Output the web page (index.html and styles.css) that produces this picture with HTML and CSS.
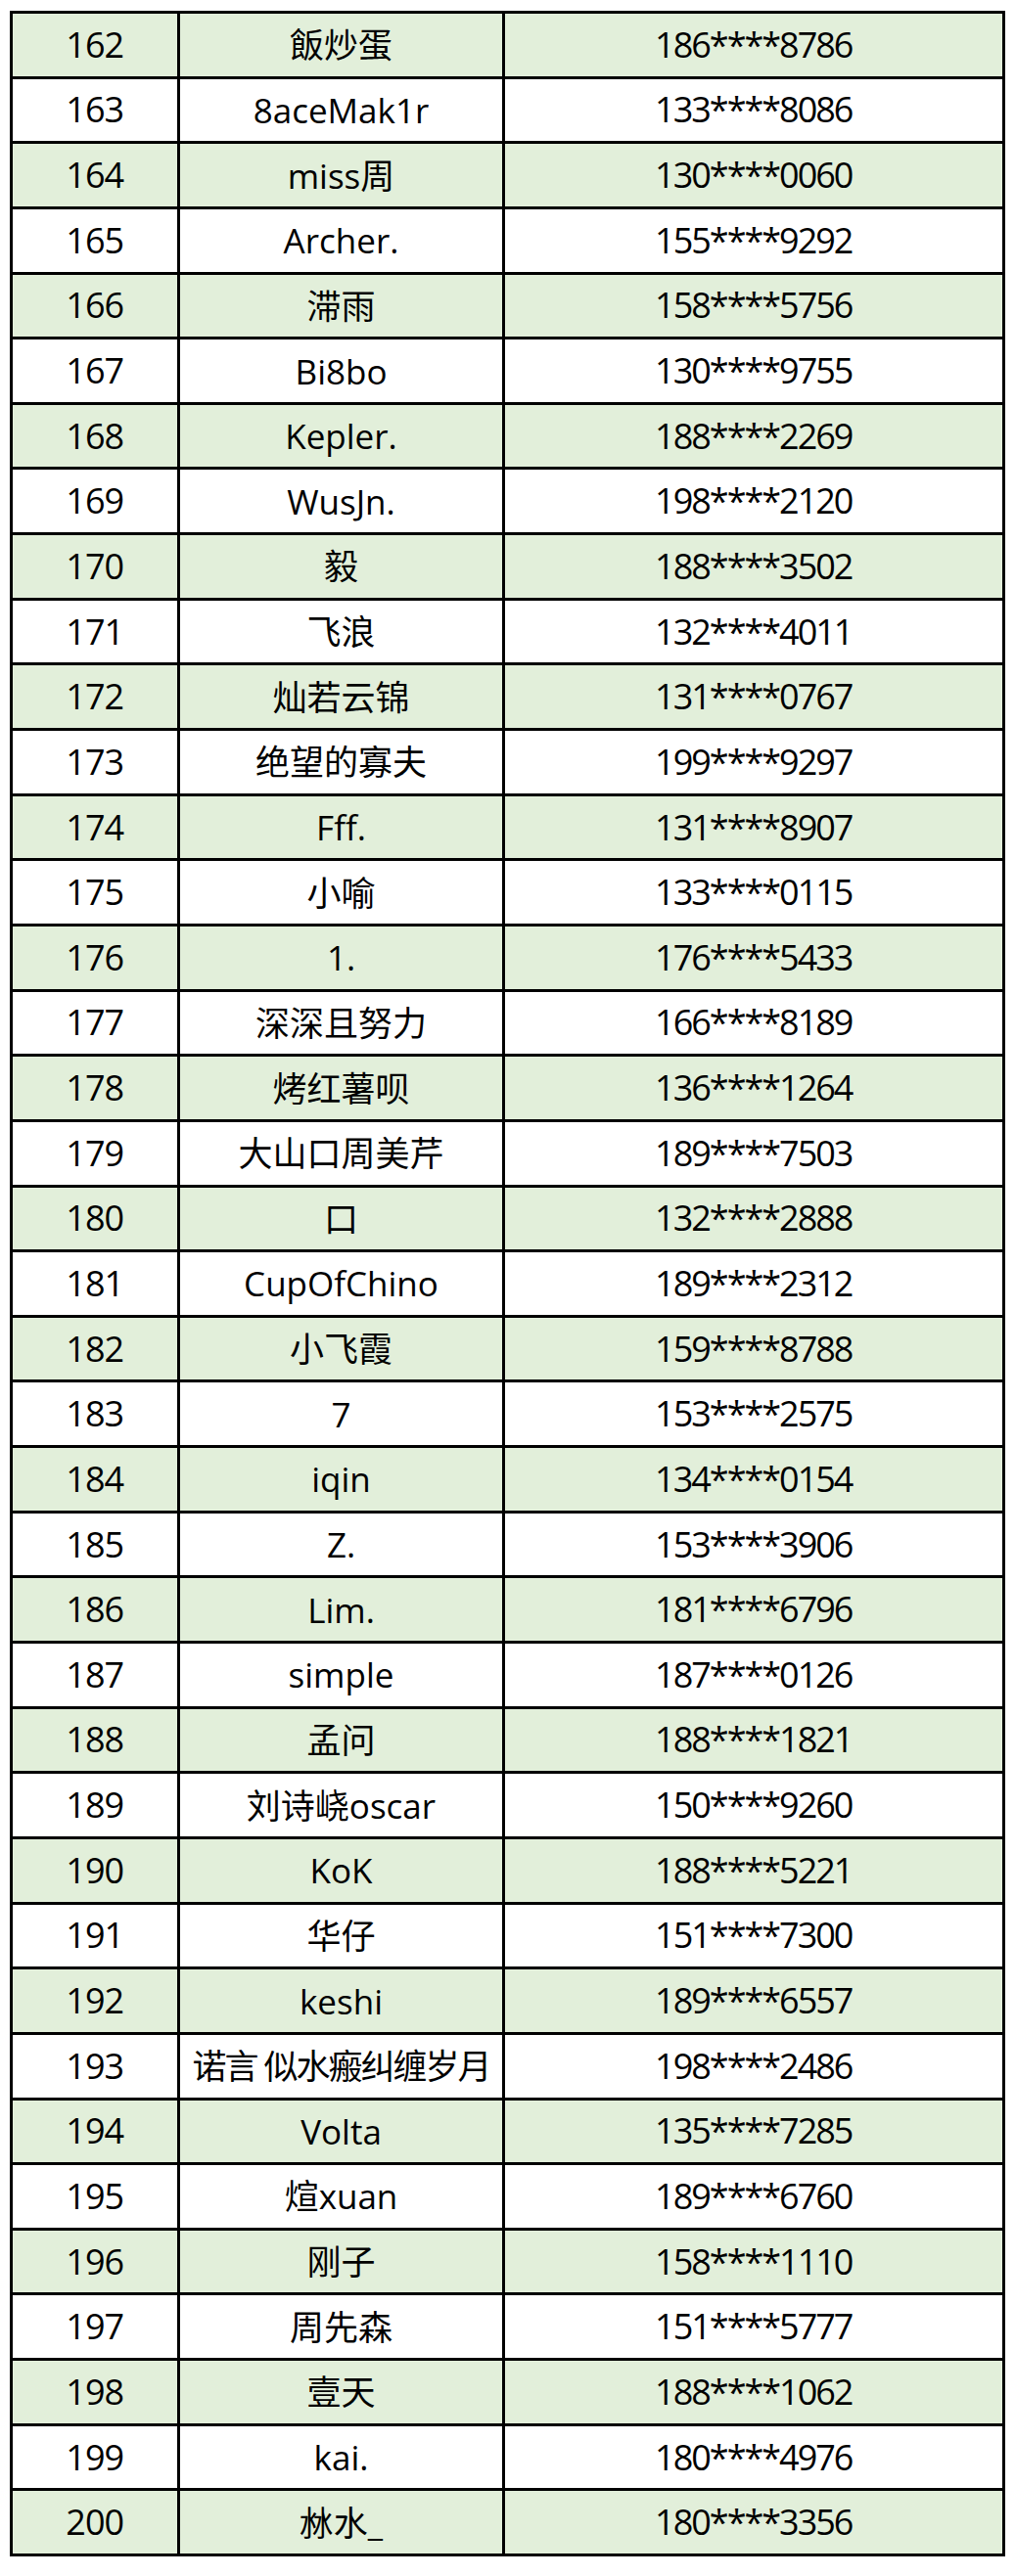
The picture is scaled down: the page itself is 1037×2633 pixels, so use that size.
FILE: index.html
```html
<!DOCTYPE html>
<html lang="zh-CN">
<head>
<meta charset="utf-8">
<title>名单</title>
<link rel="stylesheet" href="styles.css">
</head>
<body>
<div class="sheet">
<div class="cell num g">162</div><div class="cell name g">飯炒蛋</div><div class="cell tel g">186****8786</div>
<div class="cell num">163</div><div class="cell name">8aceMak1r</div><div class="cell tel">133****8086</div>
<div class="cell num g">164</div><div class="cell name g">miss周</div><div class="cell tel g">130****0060</div>
<div class="cell num">165</div><div class="cell name">Archer.</div><div class="cell tel">155****9292</div>
<div class="cell num g">166</div><div class="cell name g">滞雨</div><div class="cell tel g">158****5756</div>
<div class="cell num">167</div><div class="cell name">Bi8bo</div><div class="cell tel">130****9755</div>
<div class="cell num g">168</div><div class="cell name g">Kepler.</div><div class="cell tel g">188****2269</div>
<div class="cell num">169</div><div class="cell name">WusJn.</div><div class="cell tel">198****2120</div>
<div class="cell num g">170</div><div class="cell name g">毅</div><div class="cell tel g">188****3502</div>
<div class="cell num">171</div><div class="cell name">飞浪</div><div class="cell tel">132****4011</div>
<div class="cell num g">172</div><div class="cell name g">灿若云锦</div><div class="cell tel g">131****0767</div>
<div class="cell num">173</div><div class="cell name">绝望的寡夫</div><div class="cell tel">199****9297</div>
<div class="cell num g">174</div><div class="cell name g">Fff.</div><div class="cell tel g">131****8907</div>
<div class="cell num">175</div><div class="cell name">小喻</div><div class="cell tel">133****0115</div>
<div class="cell num g">176</div><div class="cell name g">1.</div><div class="cell tel g">176****5433</div>
<div class="cell num">177</div><div class="cell name">深深且努力</div><div class="cell tel">166****8189</div>
<div class="cell num g">178</div><div class="cell name g">烤红薯呗</div><div class="cell tel g">136****1264</div>
<div class="cell num">179</div><div class="cell name">大山口周美芹</div><div class="cell tel">189****7503</div>
<div class="cell num g">180</div><div class="cell name g">口</div><div class="cell tel g">132****2888</div>
<div class="cell num">181</div><div class="cell name">CupOfChino</div><div class="cell tel">189****2312</div>
<div class="cell num g">182</div><div class="cell name g">小飞霞</div><div class="cell tel g">159****8788</div>
<div class="cell num">183</div><div class="cell name">7</div><div class="cell tel">153****2575</div>
<div class="cell num g">184</div><div class="cell name g">iqin</div><div class="cell tel g">134****0154</div>
<div class="cell num">185</div><div class="cell name">Z.</div><div class="cell tel">153****3906</div>
<div class="cell num g">186</div><div class="cell name g">Lim.</div><div class="cell tel g">181****6796</div>
<div class="cell num">187</div><div class="cell name">simple</div><div class="cell tel">187****0126</div>
<div class="cell num g">188</div><div class="cell name g">孟问</div><div class="cell tel g">188****1821</div>
<div class="cell num">189</div><div class="cell name">刘诗峣oscar</div><div class="cell tel">150****9260</div>
<div class="cell num g">190</div><div class="cell name g">KoK</div><div class="cell tel g">188****5221</div>
<div class="cell num">191</div><div class="cell name">华仔</div><div class="cell tel">151****7300</div>
<div class="cell num g">192</div><div class="cell name g">keshi</div><div class="cell tel g">189****6557</div>
<div class="cell num">193</div><div class="cell name long">诺言 似水瘢纠缠岁月</div><div class="cell tel">198****2486</div>
<div class="cell num g">194</div><div class="cell name g">Volta</div><div class="cell tel g">135****7285</div>
<div class="cell num">195</div><div class="cell name">煊xuan</div><div class="cell tel">189****6760</div>
<div class="cell num g">196</div><div class="cell name g">刚子</div><div class="cell tel g">158****1110</div>
<div class="cell num">197</div><div class="cell name">周先森</div><div class="cell tel">151****5777</div>
<div class="cell num g">198</div><div class="cell name g">壹天</div><div class="cell tel g">188****1062</div>
<div class="cell num">199</div><div class="cell name">kai.</div><div class="cell tel">180****4976</div>
<div class="cell num g">200</div><div class="cell name g">沝水_</div><div class="cell tel g">180****3356</div>
</div>
</body>
</html>
```

FILE: styles.css
```css
html, body {
  margin: 0;
  padding: 0;
  background: #ffffff;
}

body {
  padding: 11px 0 0 9.5px;
}

.sheet {
  display: grid;
  grid-template-columns: 168.5px 329px 507.5px;
  grid-auto-rows: 63.65px;
  gap: 3px;
  padding: 3px;
  width: max-content;
  background: #000000;
  font-family: "Open Sans", "Noto Sans CJK SC", sans-serif;
  color: #000000;
}

.cell {
  display: flex;
  align-items: center;
  justify-content: center;
  background: #ffffff;
  white-space: nowrap;
  overflow: visible;
  font-size: 36px;
  line-height: 1;
}

.cell.g {
  background: #e2efda;
}

.num {
  letter-spacing: -1px;
}

.name {
  font-size: 35px;
}

.name.long {
  letter-spacing: -2px;
}

.tel {
  letter-spacing: -2px;
}
```
